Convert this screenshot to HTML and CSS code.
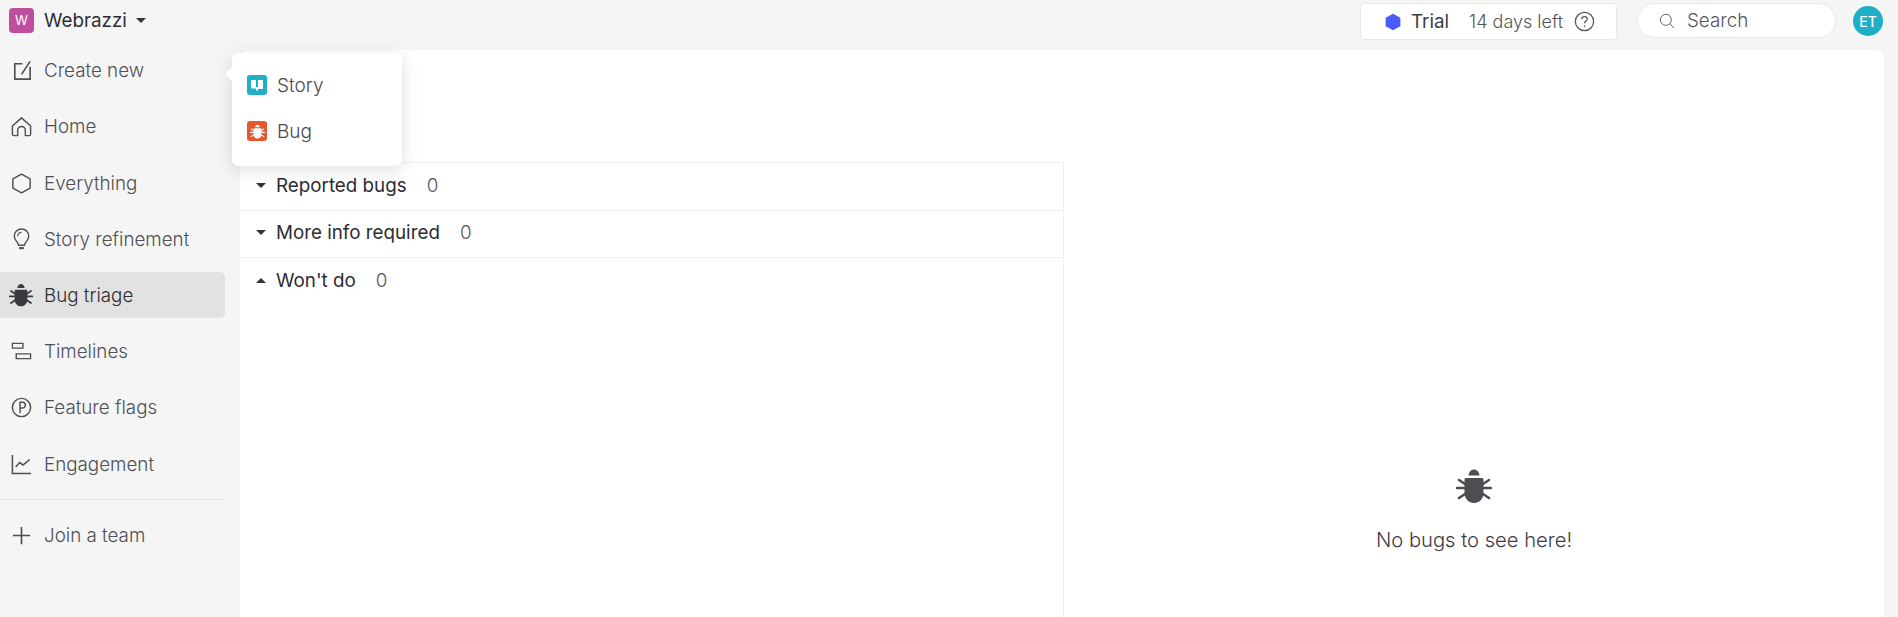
FILE: index.html
```html
<!DOCTYPE html>
<html lang="en">
<head>
<meta charset="utf-8">
<title>Bug triage</title>
<link rel="stylesheet" href="styles.css">
</head>
<body>
<svg class="defs" width="0" height="0" aria-hidden="true">
  <symbol id="bug" viewBox="0 0 36 36">
    <path d="M12.500 7.500C13 3.500 15.500 1.500 18 1.500s5 2 5.500 6z" fill="currentColor"/>
    <path d="M10 10h16c1 0 1.500.8 1.500 2v13c0 6-4.500 10-9.500 10s-9.500-4-9.500-10V12c0-1.200.5-2 1.500-2z" fill="currentColor"/>
    <path d="M9 16 3 12M27 16l6-4M8 20H1M28 20h7M9 26l-6 4M27 26l6 4" stroke="currentColor" stroke-width="2.600" stroke-linecap="round" fill="none"/>
  </symbol>
</svg>

<div class="app">
  <header class="topbar">
    <div class="workspace">
      <span class="ws-badge">W</span>
      <span class="ws-name">Webrazzi</span>
      <span class="caret down"></span>
    </div>
    <div class="top-actions">
      <div class="trial">
        <svg class="trial-hex" viewBox="0 0 16 16"><path d="M8 1.500 13.800 4.700v6.600L8 14.500 2.200 11.300V4.700z" fill="#4a5bff" stroke="#4a5bff" stroke-width="1.500" stroke-linejoin="round"/></svg>
        <span class="trial-label">Trial</span>
        <span class="trial-days">14 days left</span>
        <svg class="trial-help" viewBox="0 0 20 20"><circle cx="10" cy="10" r="8.700" fill="none" stroke="#555" stroke-width="1.200"/><path d="M7.300 7.800C7.300 6.200 8.500 5.300 10 5.300s2.700.9 2.700 2.300c0 2-2.700 2-2.700 4.100" fill="none" stroke="#555" stroke-width="1.200"/><circle cx="10" cy="14.300" r=".8" fill="#555"/></svg>
      </div>
      <div class="search">
        <svg class="search-icon" viewBox="0 0 16 16"><circle cx="6.800" cy="6.800" r="5.500" fill="none" stroke="#666" stroke-width="1"/><path d="M10.800 10.800l4.400 4.400" stroke="#666" stroke-width="1"/></svg>
        <span>Search</span>
      </div>
      <div class="avatar">ET</div>
    </div>
  </header>

  <div class="body">
    <nav class="sidebar">
      <a class="nav-item">
        <svg class="nav-icon" viewBox="0 0 24 24"><path d="M13 5H5v16h16V8M21 2.500 12 16" fill="none" stroke="#4f4f53" stroke-width="1.700"/></svg>
        <span>Create new</span>
      </a>
      <a class="nav-item">
        <svg class="nav-icon" viewBox="0 0 24 24"><path d="M2.500 11.500 12 3l9.500 8.500V20a1.500 1.500 0 0 1-1.500 1.500h-4V16a4 4 0 0 0-8 0v5.500H4A1.500 1.500 0 0 1 2.500 20z" fill="none" stroke="#4f4f53" stroke-width="1.500" stroke-linejoin="round"/></svg>
        <span>Home</span>
      </a>
      <a class="nav-item">
        <svg class="nav-icon" viewBox="0 0 24 24"><path d="M12 2.200 21 7.300v9.400l-9 5.100-9-5.100V7.300z" fill="none" stroke="#4f4f53" stroke-width="1.500" stroke-linejoin="round"/></svg>
        <span>Everything</span>
      </a>
      <a class="nav-item">
        <svg class="nav-icon" viewBox="0 0 24 24"><path d="M9 18c0-3-4.500-4.500-4.500-9.500a7.500 7.500 0 0 1 15 0C19.500 13.500 15 15 15 18z" fill="none" stroke="#4f4f53" stroke-width="1.500"/><path d="M8 8.500A4 4 0 0 1 12 4.500" fill="none" stroke="#4f4f53" stroke-width="1.200"/><path d="M9.500 21h5" stroke="#4f4f53" stroke-width="2.200"/></svg>
        <span>Story refinement</span>
      </a>
      <a class="nav-item active">
        <svg class="nav-icon bug-nav"><use href="#bug"/></svg>
        <span>Bug triage</span>
      </a>
      <a class="nav-item">
        <svg class="nav-icon" viewBox="0 0 24 24"><path d="M2.500 3.500h11v5h-11zM6.500 14.500h15v5h-15z" fill="none" stroke="#4f4f53" stroke-width="1.400"/></svg>
        <span>Timelines</span>
      </a>
      <a class="nav-item">
        <svg class="nav-icon" viewBox="0 0 24 24"><circle cx="12" cy="12" r="9.500" fill="none" stroke="#4f4f53" stroke-width="1.500"/><path d="M10.500 18V6.500h2.500a3 3 0 0 1 0 6h-2.500" fill="none" stroke="#4f4f53" stroke-width="1.500"/></svg>
        <span>Feature flags</span>
      </a>
      <a class="nav-item">
        <svg class="nav-icon" viewBox="0 0 24 24"><path d="M2.500 2v19.500H22" fill="none" stroke="#4f4f53" stroke-width="1.600"/><path d="M6 14.500 10 10l3.500 2.500L20.500 7" fill="none" stroke="#4f4f53" stroke-width="1.600"/></svg>
        <span>Engagement</span>
      </a>
      <div class="nav-divider"></div>
      <a class="nav-item">
        <svg class="nav-icon" viewBox="0 0 24 24"><path d="M12 3v18M3 12h18" stroke="#4f4f53" stroke-width="1.700"/></svg>
        <span>Join a team</span>
      </a>
    </nav>

    <main class="card">
      <div class="groups">
        <div class="group"><span class="caret down small"></span><span class="group-name">Reported bugs</span><span class="group-count">0</span></div>
        <div class="group"><span class="caret down small"></span><span class="group-name">More info required</span><span class="group-count">0</span></div>
        <div class="group"><span class="caret up small"></span><span class="group-name">Won't do</span><span class="group-count">0</span></div>
      </div>
      <div class="empty">
        <svg class="empty-icon"><use href="#bug"/></svg>
        <p class="empty-text">No bugs to see here!</p>
      </div>
    </main>
  </div>

  <div class="popup">
    <span class="popup-arrow"></span>
    <div class="popup-item">
      <span class="type-icon story"><svg viewBox="0 0 20 20"><path d="M4 5h5v8.500H4zM11 5h5v9h-5z" fill="#fff"/><path d="M9 12h2v4l-1-1-1 1z" fill="#fff"/></svg></span>
      <span>Story</span>
    </div>
    <div class="popup-item">
      <span class="type-icon bugtype"><svg><use href="#bug"/></svg></span>
      <span>Bug</span>
    </div>
  </div>
</div>
</body>
</html>
```
FILE: styles.css
```css
* { box-sizing: border-box; }
html, body { margin: 0; height: 100%; overflow: hidden; }
body {
  background: #f5f5f5;
  font-family: Inter, "Liberation Sans", sans-serif;
  color: #2e2e33;
}
.defs { position: absolute; }
.app { position: relative; height: 617px; display: flex; flex-direction: column; }

.topbar { height: 50px; flex: none; display: flex; justify-content: space-between; align-items: flex-start; }
.workspace { display: flex; align-items: center; height: 40px; padding-left: 9px; }
.ws-badge {
  width: 25px; height: 25px; border-radius: 4px; background: #bd4f9e; color: #fff;
  font-size: 13px; font-weight: 400; display: flex; align-items: center; justify-content: center;
}
.ws-name { margin-left: 10px; font-size: 18.800px; color: #2c2c33; }
.caret { width: 0; height: 0; border-left: 5px solid transparent; border-right: 5px solid transparent; }
.caret.down { border-top: 5.500px solid #333338; }
.caret.up { border-bottom: 5.500px solid #333338; }
.workspace .caret { margin-left: 9px; }

.top-actions { display: flex; align-items: flex-start; padding-top: 3px; padding-right: 15px; }
.trial {
  width: 257px; height: 37px; background: #fff; border: 1px solid #e8e8e8; border-radius: 4px;
  display: flex; align-items: center; padding-left: 23px; font-size: 18.800px;
}
.trial-hex { width: 18px; height: 18px; flex: none; }
.trial-label { margin-left: 9px; color: #3b3b40; }
.trial-days { margin-left: 20px; font-size: 18px; font-weight: 300; color: #55555a; }
.trial-help { width: 21px; height: 21px; margin-left: 11px; flex: none; }
.search {
  width: 199px; height: 35px; margin-left: 20px; background: #fff; border: 1px solid #e8e8e8; border-radius: 18px;
  display: flex; align-items: center; padding-left: 21px; font-size: 18.800px; font-weight: 300; color: #55555a;
}
.search-icon { width: 16px; height: 16px; margin-right: 12px; }
.avatar {
  width: 30px; height: 30px; margin: 3px 0 0 17px; border-radius: 50%; background: #1eaec5; color: #fff;
  font-size: 14px; font-weight: 500; display: flex; align-items: center; justify-content: center;
}

.body { flex: 1; display: flex; min-height: 0; }
.sidebar { width: 240px; flex: none; margin-top: -2.300px; }
.nav-item {
  width: 225px; height: 46px; margin-bottom: 10.200px; border-radius: 0 5px 5px 0; display: flex; align-items: center;
  padding-left: 10px; font-size: 18.800px; font-weight: 300; color: #4f4f55;
}
.nav-item.active { background: #e2e2e2; color: #2e2e36; }
.nav-icon { width: 23px; height: 23px; margin-right: 11px; flex: none; }
.bug-nav { width: 24px; height: 24px; margin-left: -1px; color: #39393f; }
.nav-divider { width: 225px; height: 1px; background: #e6e6e6; margin: 11.700px 0 12.600px; }

.card {
  flex: 1; margin-right: 14px; background: #fff; border-radius: 10px 10px 0 0;
  display: flex; padding-top: 112px; min-width: 0;
}
.groups { width: 824px; flex: none; border-right: 1px solid #f0f0f0; border-top: 1px solid #f0f0f0; }
.group {
  height: 47.500px; display: flex; align-items: center; padding-left: 16px; padding-bottom: 2px; border-bottom: 1px solid #f0f0f0;
  font-size: 18.800px;
}
.group:last-child { border-bottom: 0; }
.group-name { margin-left: 10px; color: #2c2c33; }
.group-count { margin-left: 20px; font-weight: 300; color: #55555a; }

.empty { flex: 1; display: flex; flex-direction: column; align-items: center; padding-top: 307px; margin-top: -1px; }
.empty-icon { width: 36px; height: 36px; color: #4d4d52; }
.empty-text { margin: 24px 0 0; font-size: 20.200px; font-weight: 300; color: #3d3d44; line-height: 24px; white-space: nowrap; }

.popup {
  position: absolute; left: 232px; top: 53px; width: 170px; height: 113px; padding-top: 9px;
  background: #fff; border-radius: 6px; box-shadow: 0 4px 18px rgba(0,0,0,.13);
  font-size: 19px; font-weight: 300; color: #4a4a50;
}
.popup-arrow {
  position: absolute; left: -5px; top: 16px; width: 10px; height: 10px; background: #fff; transform: rotate(45deg);
}
.popup-item { position: relative; height: 46px; display: flex; align-items: center; padding-left: 15px; gap: 10px; }
.type-icon { width: 20px; height: 20px; border-radius: 3px; display: flex; align-items: center; justify-content: center; }
.type-icon svg { width: 20px; height: 20px; }
.story { background: #1eaec5; }
.bugtype { background: #e5582e; color: #fff; }
.bugtype svg { width: 15px; height: 15px; }
```
